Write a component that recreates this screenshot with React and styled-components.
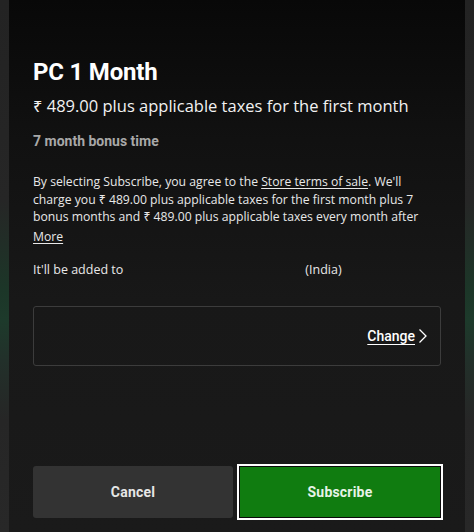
import React from "react";
import styled, { createGlobalStyle } from "styled-components";

const Global = createGlobalStyle`
  html, body { margin: 0; padding: 0; }
  body {
    width: 474px;
    height: 532px;
    overflow: hidden;
    background: linear-gradient(to bottom, #232323 0px, #262626 200px, #1c3628 290px, #1d3a2b 320px, #22302a 360px, #262626 420px, #282828 532px);
  }
`;

const Panel = styled.div`
  margin: 0 9px;
  height: 532px;
  box-sizing: border-box;
  padding: 58px 24px 12px 24px;
  display: flex;
  flex-direction: column;
  background: linear-gradient(to bottom, #080808 0px, #111111 140px, #181818 300px, #1a1a1a 532px);
  color: #ffffff;
  font-family: "Open Sans", "Noto Sans", sans-serif;
`;

const Title = styled.h1`
  margin: 0;
  font-family: Roboto, "Noto Sans", sans-serif;
  font-weight: 700;
  font-size: 24px;
  line-height: 28px;
  letter-spacing: -0.2px;
`;

const Price = styled.div`
  margin-top: 9px;
  font-size: 16.5px;
  line-height: 22px;
  color: #f2f2f2;
`;

const Bonus = styled.div`
  margin-top: 15px;
  font-family: Roboto, "Noto Sans", sans-serif;
  font-weight: 700;
  font-size: 14px;
  line-height: 18px;
  color: #a8a8a8;
`;

const Para = styled.p`
  margin: 23px 0 0 0;
  font-size: 12.2px;
  line-height: 17.5px;
  color: #e8e8e8;
`;

const Link = styled.a`
  color: inherit;
  text-decoration: underline;
  text-underline-offset: 2px;
`;

const MoreLink = styled(Link)`
  display: inline-block;
  margin-top: 2px;
`;

const Added = styled.div`
  margin-top: 16px;
  font-size: 12.5px;
  line-height: 18px;
  color: #e8e8e8;
  display: flex;
  align-items: center;
`;

const Redacted = styled.span`
  display: inline-block;
  width: 174px;
  height: 1px;
  margin: 0 4px;
`;

const Box = styled.div`
  margin-top: 27px;
  height: 60px;
  box-sizing: border-box;
  border: 1px solid #3c3c3c;
  border-radius: 3px;
  display: flex;
  align-items: center;
  justify-content: flex-end;
  padding-right: 12px;
`;

const ChangeBtn = styled.a`
  display: flex;
  align-items: center;
  gap: 3px;
  font-family: Roboto, "Noto Sans", sans-serif;
  font-weight: 500;
  font-size: 14px;
  color: #ffffff;
  text-decoration: underline;
  text-underline-offset: 3px;
`;

const Spacer = styled.div`
  flex: 1;
`;

const Buttons = styled.div`
  display: grid;
  grid-template-columns: 200px 206px;
  gap: 4px;
  align-items: center;
`;

const Button = styled.button`
  height: ${(p) => (p.$primary ? "56px" : "52px")};
  border: ${(p) => (p.$primary ? "2px solid #ffffff" : "none")};
  box-shadow: ${(p) => (p.$primary ? "inset 0 0 0 1px #0a0a0a" : "none")};
  border-radius: ${(p) => (p.$primary ? "0" : "3px")};
  background: ${(p) => (p.$primary ? "#107c10" : "#333333")};
  color: ${(p) => (p.$primary ? "#e8f3e8" : "#e6e6e6")};
  font-family: Roboto, "Noto Sans", sans-serif;
  font-weight: 700;
  font-size: 14px;
  letter-spacing: 0.2px;
  cursor: pointer;
`;

export default function App() {
  return (
    <>
      <Global />
      <Panel>
        <Title>PC 1 Month</Title>
        <Price>₹ 489.00 plus applicable taxes for the first month</Price>
        <Bonus>7 month bonus time</Bonus>
        <Para>
          By selecting Subscribe, you agree to the <Link>Store terms of sale</Link>. We'll
          charge you ₹ 489.00 plus applicable taxes for the first month plus 7 bonus
          months and ₹ 489.00 plus applicable taxes every month after
          <br />
          <MoreLink>More</MoreLink>
        </Para>
        <Added>
          It'll be added to<Redacted />(India)
        </Added>
        <Box>
          <ChangeBtn>
            Change
            <svg width="10" height="16" viewBox="0 0 10 16" fill="none">
              <path d="M1.5 1.5 L8 8 L1.5 14.5" stroke="#ffffff" strokeWidth="1.3" />
            </svg>
          </ChangeBtn>
        </Box>
        <Spacer />
        <Buttons>
          <Button>Cancel</Button>
          <Button $primary>Subscribe</Button>
        </Buttons>
      </Panel>
    </>
  );
}
